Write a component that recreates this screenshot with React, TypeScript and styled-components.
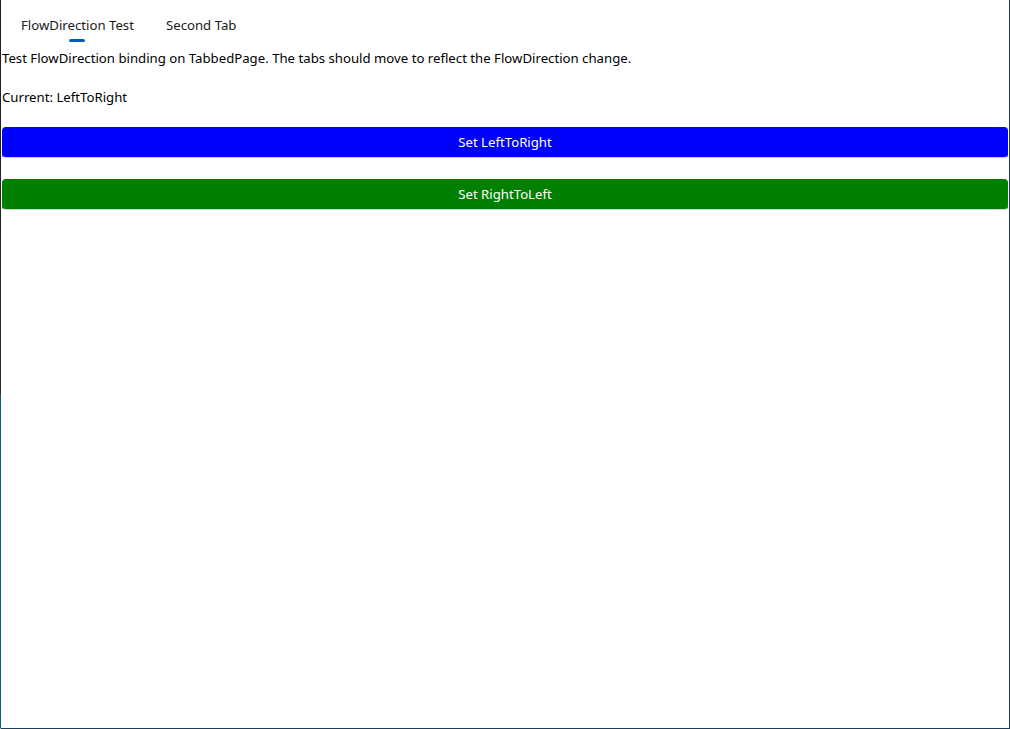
import React from "react";
import styled, { createGlobalStyle } from "styled-components";

const Global = createGlobalStyle`
  html, body { margin: 0; padding: 0; background: #fff; }
  body { font-family: "Noto Sans", "Open Sans", sans-serif; }
`;

const Window = styled.div`
  box-sizing: border-box;
  width: 1010px;
  height: 729px;
  display: flex;
  flex-direction: column;
  border-right: 1px solid #1f3b5c;
  border-bottom: 1px solid #1b3d5e;
  border-left: 1px solid transparent;
  background: #fff;
  position: relative;
`;

const LeftEdge = styled.div`
  position: absolute;
  left: -1px;
  top: 0;
  bottom: 0;
  width: 1px;
  background: linear-gradient(to bottom, #1e1e1e 0, #2a2a2a 394px, #115e78 395px, #115e78 100%);
`;

const TabBar = styled.div`
  display: flex;
  align-items: stretch;
  height: 44px;
  padding-left: 20px;
  gap: 32px;
`;

const Tab = styled.div<{ $active?: boolean }>`
  position: relative;
  display: flex;
  align-items: center;
  justify-content: center;
  height: 44px;
  padding-top: 6px;
  box-sizing: border-box;
  font-size: 13.2px;
  color: #1a1a1a;
  white-space: nowrap;
  &::after {
    content: "";
    display: ${(p) => (p.$active ? "block" : "none")};
    position: absolute;
    left: 50%;
    transform: translateX(-50%);
    top: 39px;
    width: 16px;
    height: 3px;
    border-radius: 2px;
    background: #005fb8;
  }
`;

const Content = styled.div`
  display: flex;
  flex-direction: column;
  padding: 5px 1px 0 1px;
`;

const Label = styled.div<{ $gap?: number }>`
  font-size: 13.2px;
  line-height: 19px;
  color: #000;
  margin-bottom: ${(p) => p.$gap ?? 0}px;
  white-space: nowrap;
`;

const Button = styled.button<{ $bg: string; $gap?: number }>`
  box-sizing: border-box;
  height: 31px;
  width: 100%;
  margin: 0 0 ${(p) => p.$gap ?? 0}px 0;
  border: 1px solid ${(p) => p.$bg};
  border-bottom-color: #d2d2d2;
  border-radius: 4px;
  background: ${(p) => p.$bg};
  color: #fff;
  font-family: "Noto Sans", "Open Sans", sans-serif;
  font-size: 13.2px;
  padding: 0 0 1px 0;
  display: flex;
  align-items: center;
  justify-content: center;
  cursor: pointer;
`;

export default function App() {
  return (
    <>
      <Global />
      <Window>
        <LeftEdge />
        <TabBar>
          <Tab $active>FlowDirection Test</Tab>
          <Tab>Second Tab</Tab>
        </TabBar>
        <Content>
          <Label $gap={20}>
            Test FlowDirection binding on TabbedPage. The tabs should move to reflect the FlowDirection change.
          </Label>
          <Label $gap={20}>Current: LeftToRight</Label>
          <Button $bg="#0000ff" $gap={21}>Set LeftToRight</Button>
          <Button $bg="#008000">Set RightToLeft</Button>
        </Content>
      </Window>
    </>
  );
}
